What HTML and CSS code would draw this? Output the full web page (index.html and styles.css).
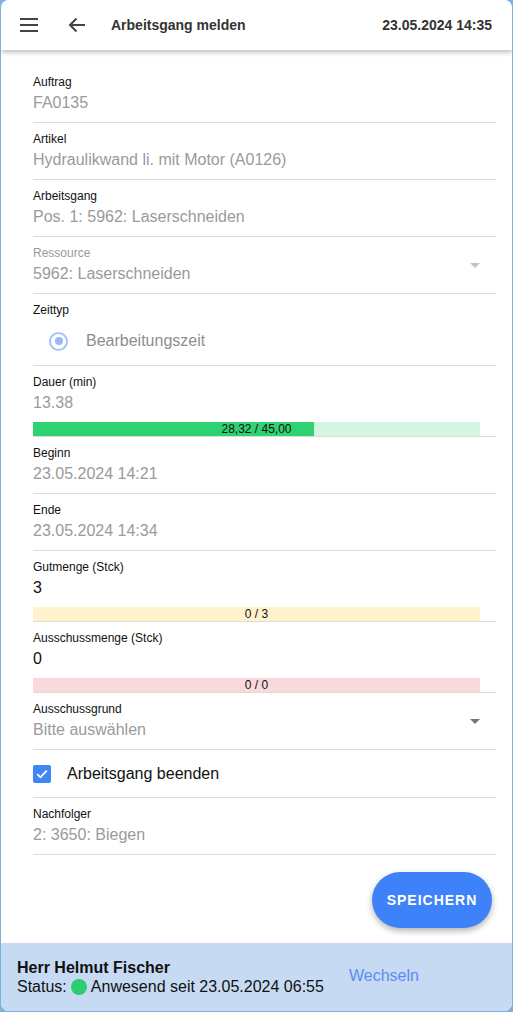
FILE: index.html
```html
<!DOCTYPE html>
<html lang="de">
<head>
<meta charset="utf-8">
<link rel="stylesheet" href="styles.css">
</head>
<body>
<div class="app">
  <header class="topbar">
    <svg class="icon menu" width="18" height="14" viewBox="0 0 18 14"><rect x="0" y="0" width="18" height="2" fill="#444"/><rect x="0" y="6" width="18" height="2" fill="#444"/><rect x="0" y="12" width="18" height="2" fill="#444"/></svg>
    <svg class="icon back" width="18" height="16" viewBox="0 0 18 16"><path d="M17 8H2.5M8.5 1.5L2 8l6.5 6.5" fill="none" stroke="#444" stroke-width="2"/></svg>
    <div class="title">Arbeitsgang melden</div>
    <div class="clock">23.05.2024 14:35</div>
  </header>
  <main class="content">
    <div class="field">
      <div class="label">Auftrag</div>
      <div class="value">FA0135</div>
    </div>
    <div class="field">
      <div class="label">Artikel</div>
      <div class="value">Hydraulikwand li. mit Motor (A0126)</div>
    </div>
    <div class="field">
      <div class="label">Arbeitsgang</div>
      <div class="value">Pos. 1: 5962: Laserschneiden</div>
    </div>
    <div class="field select disabled">
      <div class="label">Ressource</div>
      <div class="value">5962: Laserschneiden</div>
      <span class="caret"></span>
    </div>
    <div class="field radio-field">
      <div class="label">Zeittyp</div>
      <div class="radio-row"><span class="radio"></span><span class="radio-text">Bearbeitungszeit</span></div>
    </div>
    <div class="field with-bar">
      <div class="label">Dauer (min)</div>
      <div class="value">13.38</div>
      <div class="bar green"><div class="fill" style="width:62.9%"></div><span class="bar-text">28,32 / 45,00</span></div>
    </div>
    <div class="field">
      <div class="label">Beginn</div>
      <div class="value">23.05.2024 14:21</div>
    </div>
    <div class="field">
      <div class="label">Ende</div>
      <div class="value">23.05.2024 14:34</div>
    </div>
    <div class="field with-bar">
      <div class="label">Gutmenge (Stck)</div>
      <div class="value dark">3</div>
      <div class="bar yellow"><span class="bar-text">0 / 3</span></div>
    </div>
    <div class="field with-bar">
      <div class="label">Ausschussmenge (Stck)</div>
      <div class="value dark">0</div>
      <div class="bar red"><span class="bar-text">0 / 0</span></div>
    </div>
    <div class="field select">
      <div class="label">Ausschussgrund</div>
      <div class="value">Bitte auswählen</div>
      <span class="caret dark"></span>
    </div>
    <div class="field check-field">
      <span class="checkbox"><svg width="12" height="10" viewBox="0 0 12 10"><path d="M1.2 5.2l3.2 3.1L10.8 1.6" fill="none" stroke="#fff" stroke-width="1.8"/></svg></span>
      <span class="check-text">Arbeitsgang beenden</span>
    </div>
    <div class="field">
      <div class="label">Nachfolger</div>
      <div class="value">2: 3650: Biegen</div>
    </div>
    <div class="actions">
      <button class="save">SPEICHERN</button>
    </div>
  </main>
  <footer class="userbar">
    <div class="user">
      <div class="name">Herr Helmut Fischer</div>
      <div class="status">Status: <span class="dot"></span> Anwesend seit 23.05.2024 06:55</div>
    </div>
    <a class="switch">Wechseln</a>
  </footer>
</div>
</body>
</html>
```
FILE: styles.css
```css
* { box-sizing: border-box; }
html, body { margin: 0; padding: 0; }
body {
  background: #7fb1de;
  font-family: "Liberation Sans", Arial, sans-serif;
  height: 1012px;
  overflow: hidden;
}
.app {
  margin: 0 1px 1px 1px;
  height: 1011px;
  background: #fff;
  border-radius: 8px;
  overflow: hidden;
  display: flex;
  flex-direction: column;
}
.topbar {
  height: 50px;
  flex: none;
  display: flex;
  align-items: center;
  padding: 0 20px 0 19px;
  background: #fff;
  box-shadow: 0 2px 5px rgba(0,0,0,0.28);
  position: relative;
  z-index: 2;
}
.icon { display: block; flex: none; }
.menu { margin-right: 30px; }
.back { margin-right: 25px; }
.title {
  font-weight: bold;
  font-size: 14px;
  color: #333;
  flex: 1;
}
.clock {
  font-weight: bold;
  font-size: 14px;
  color: #333;
}
.content {
  flex: 1;
  padding: 16px 16px 0 32px;
}
.field {
  position: relative;
  border-bottom: 1px solid #dcdcdc;
  padding: 9px 0 9px 0;
}
.label {
  font-size: 12px;
  line-height: 14px;
  color: #111;
}
.value {
  font-size: 16px;
  line-height: 20px;
  color: #9a9a9a;
  margin-top: 4px;
}
.value.dark { color: #111; }
.disabled .label { color: #999; }
.caret {
  position: absolute;
  right: 16px;
  top: 26px;
  width: 0; height: 0;
  border-left: 5px solid transparent;
  border-right: 5px solid transparent;
  border-top: 5px solid #c4c4c4;
}
.caret.dark { border-top-color: #777; }
.radio-field { padding-bottom: 13px; }
.radio-row {
  display: flex;
  align-items: center;
  margin-top: 13px;
  padding-left: 16px;
  height: 22px;
}
.radio {
  width: 19px; height: 19px;
  border-radius: 50%;
  border: 2px solid #a7c4f7;
  position: relative;
  margin-right: 18px;
  flex: none;
}
.radio::after {
  content: "";
  position: absolute;
  left: 3.5px; top: 3.5px;
  width: 8px; height: 8px;
  border-radius: 50%;
  background: #97b9f6;
}
.radio-text { font-size: 16px; color: #8e8e8e; }
.with-bar { padding-bottom: 0; }
.bar {
  position: relative;
  height: 14px;
  margin: 9px 16px 0 0;
  display: flex;
  align-items: center;
  justify-content: center;
}
.bar.green { background: #d4f5e2; }
.bar.yellow { background: #fff2cc; }
.bar.red { background: #f9d9dc; }
.bar .fill {
  position: absolute;
  left: 0; top: 0; bottom: 0;
  background: #2ed271;
}
.bar-text {
  position: relative;
  font-size: 12px;
  line-height: 14px;
  color: #111;
}
.check-field {
  display: flex;
  align-items: center;
  height: 48px;
  padding: 0;
}
.checkbox {
  width: 18px; height: 18px;
  border-radius: 2px;
  background: #4286f5;
  display: flex;
  align-items: center;
  justify-content: center;
  margin-right: 16px;
}
.checkbox svg { display: block; }
.check-text { font-size: 16px; color: #111; }
.actions {
  display: flex;
  justify-content: flex-end;
  margin: 17px 4px 0 0;
}
.save {
  width: 120px;
  height: 56px;
  border: none;
  border-radius: 28px;
  background: #3d82f8;
  color: #fff;
  font-family: "Liberation Sans", Arial, sans-serif;
  font-weight: bold;
  font-size: 14px;
  letter-spacing: 1px;
  box-shadow: 0 3px 6px rgba(0,0,0,0.3);
}
.userbar {
  height: 68px;
  flex: none;
  background: #c6daf3;
  display: flex;
  align-items: center;
  padding: 0 16px 0 16px;
}
.user { width: 332px; }
.name { font-weight: bold; font-size: 16px; line-height: 19px; color: #111; }
.status { font-size: 16px; line-height: 19px; color: #111; display: flex; align-items: center; }
.dot {
  display: inline-block;
  width: 16px; height: 16px;
  border-radius: 50%;
  background: #2ecc71;
  margin: 0 4px 0 4px;
}
.switch {
  font-size: 16px;
  color: #5b8cef;
  margin-bottom: 2px;
}
```
